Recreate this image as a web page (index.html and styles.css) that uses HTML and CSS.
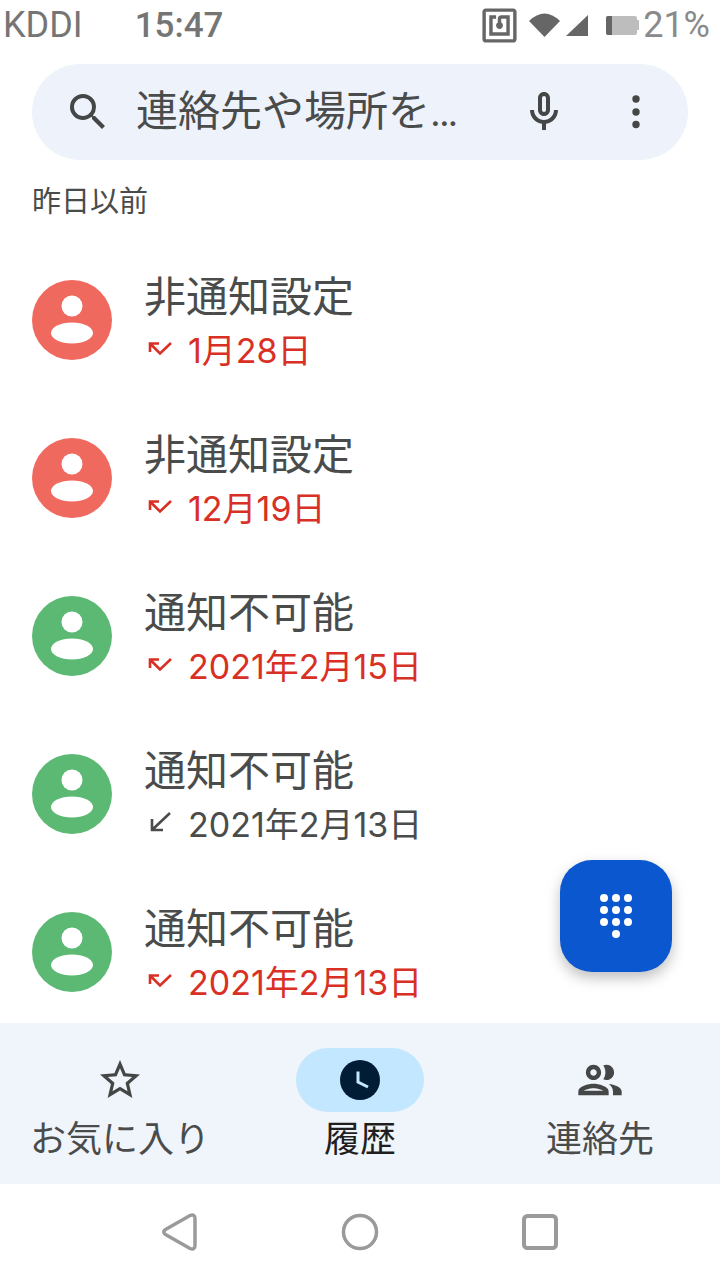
FILE: index.html
```html
<!DOCTYPE html>
<html lang="ja">
<head>
  <meta charset="UTF-8">
  <meta name="viewport" content="width=device-width, initial-scale=1.0">
  <title>履歴</title>
  <link rel="stylesheet" href="styles.css">
</head>
<body>
  <svg class="defs" aria-hidden="true">
    <symbol id="avatar" viewBox="0 0 80 80">
      <circle cx="40" cy="40" r="40" fill="currentColor"/>
      <circle cx="40" cy="26" r="10.5" fill="#fff"/>
      <ellipse cx="40" cy="53" rx="21" ry="10.5" fill="#fff"/>
    </symbol>
    <symbol id="missed" viewBox="0 0 24 24">
      <path d="M2 15V6.5h9M2.5 7l9.5 9.5L23 6" fill="none" stroke="currentColor" stroke-width="2.6"/>
    </symbol>
    <symbol id="incoming" viewBox="0 0 24 24">
      <path d="M4 8v11h11M4.5 18.500 22 2" fill="none" stroke="currentColor" stroke-width="2.6"/>
    </symbol>
  </svg>

  <div class="screen">
    <div class="status">
      <span class="carrier">KDDI</span>
      <span class="time">15:47</span>
      <div class="status-right">
        <svg class="ico-nfc" width="41" height="41" viewBox="0 0 24 24"><path fill="#666" d="M20 2H4c-1.100 0-2 .9-2 2v16c0 1.100.9 2 2 2h16c1.100 0 2-.9 2-2V4c0-1.100-.9-2-2-2zm0 18H4V4h16v16zM18 6h-5c-1.100 0-2 .9-2 2v2.280c-.6.350-1 .98-1 1.720 0 1.100.9 2 2 2s2-.9 2-2c0-.74-.4-1.380-1-1.720V8h3v8H8V8h2V6H6v12h12V6z"/></svg>
        <svg class="ico-wifi" width="31" height="24" viewBox="0 0 31 24"><path fill="#666" d="M0 8Q15.500-7 31 8L15.500 24z"/></svg>
        <svg class="ico-signal" width="22" height="21" viewBox="0 0 22 21"><path fill="#666" d="M0 21 22 0v21z"/></svg>
        <svg class="ico-battery" width="33" height="19" viewBox="0 0 33 19">
          <path fill="#bdbdbd" d="M2 0h27a2 2 0 0 1 2 2v2h2v10h-2v3a2 2 0 0 1-2 2H2a2 2 0 0 1-2-2V2a2 2 0 0 1 2-2z"/>
          <path fill="#666" d="M2 0h4v19H2a2 2 0 0 1-2-2V2a2 2 0 0 1 2-2z"/>
        </svg>
        <span class="battery-text">21%</span>
      </div>
    </div>

    <div class="search">
      <svg width="48" height="48" viewBox="0 0 24 24"><path fill="#444746" d="M15.500 14h-.79l-.28-.27A6.470 6.470 0 0 0 16 9.500 6.500 6.500 0 1 0 9.500 16c1.610 0 3.090-.59 4.230-1.570l.27.28v.79l5 4.990L20.490 19l-4.990-5zm-6 0C7.010 14 5 11.990 5 9.500S7.010 5 9.500 5 14 7.010 14 9.500 11.990 14 9.500 14z"/></svg>
      <span class="search-text">連絡先や場所を…</span>
      <svg width="48" height="48" viewBox="0 0 24 24"><path fill="#444746" d="M12 14c1.660 0 3-1.340 3-3V5c0-1.660-1.340-3-3-3S9 3.340 9 5v6c0 1.660 1.340 3 3 3zm-1-9c0-.55.45-1 1-1s1 .45 1 1v6c0 .55-.45 1-1 1s-1-.45-1-1V5zm6 6c0 2.760-2.240 5-5 5s-5-2.240-5-5H5c0 3.530 2.610 6.430 6 6.920V21h2v-3.080c3.390-.49 6-3.390 6-6.920h-2z"/></svg>
      <svg width="48" height="48" viewBox="0 0 48 48" fill="#444746"><circle cx="24" cy="11" r="3.700"/><circle cx="24" cy="24" r="3.700"/><circle cx="24" cy="36.500" r="3.700"/></svg>
    </div>

    <main class="history">
      <div class="section-label">昨日以前</div>

      <div class="row">
        <svg class="avatar red"><use href="#avatar"/></svg>
        <div class="row-text">
          <div class="name">非通知設定</div>
          <div class="call missed"><svg class="call-icon"><use href="#missed"/></svg>1月28日</div>
        </div>
      </div>
      <div class="row">
        <svg class="avatar red"><use href="#avatar"/></svg>
        <div class="row-text">
          <div class="name">非通知設定</div>
          <div class="call missed"><svg class="call-icon"><use href="#missed"/></svg>12月19日</div>
        </div>
      </div>
      <div class="row">
        <svg class="avatar green"><use href="#avatar"/></svg>
        <div class="row-text">
          <div class="name">通知不可能</div>
          <div class="call missed"><svg class="call-icon"><use href="#missed"/></svg>2021年2月15日</div>
        </div>
      </div>
      <div class="row">
        <svg class="avatar green"><use href="#avatar"/></svg>
        <div class="row-text">
          <div class="name">通知不可能</div>
          <div class="call"><svg class="call-icon"><use href="#incoming"/></svg>2021年2月13日</div>
        </div>
      </div>
      <div class="row">
        <svg class="avatar green"><use href="#avatar"/></svg>
        <div class="row-text">
          <div class="name">通知不可能</div>
          <div class="call missed"><svg class="call-icon"><use href="#missed"/></svg>2021年2月13日</div>
        </div>
      </div>

      <button class="fab" type="button" aria-label="dialpad">
        <svg width="48" height="48" viewBox="0 0 48 48" fill="#fff">
          <circle cx="12" cy="6" r="4"/><circle cx="24" cy="6" r="4"/><circle cx="36" cy="6" r="4"/>
          <circle cx="12" cy="18" r="4"/><circle cx="24" cy="18" r="4"/><circle cx="36" cy="18" r="4"/>
          <circle cx="12" cy="30" r="4"/><circle cx="24" cy="30" r="4"/><circle cx="36" cy="30" r="4"/>
          <circle cx="24" cy="42" r="4"/>
        </svg>
      </button>
    </main>

    <nav class="tabs">
      <div class="tab">
        <div class="tab-icon">
          <svg width="48" height="48" viewBox="0 0 24 24"><path fill="#444746" d="M22 9.240l-7.190-.62L12 2 9.190 8.630 2 9.240l5.460 4.730L5.820 21 12 17.270 18.180 21l-1.630-7.030L22 9.240zM12 15.400l-3.760 2.270 1-4.280-3.320-2.880 4.380-.38L12 6.100l1.710 4.040 4.380.38-3.320 2.880 1 4.280L12 15.400z"/></svg>
        </div>
        <span class="tab-label">お気に入り</span>
      </div>
      <div class="tab active">
        <div class="tab-icon">
          <svg width="40" height="40" viewBox="0 0 40 40">
            <circle cx="20" cy="20" r="20" fill="#001d35"/>
            <path d="M18 11.500V22l10 5" fill="none" stroke="#c2e7ff" stroke-width="3"/>
          </svg>
        </div>
        <span class="tab-label">履歴</span>
      </div>
      <div class="tab">
        <div class="tab-icon">
          <svg width="52" height="52" viewBox="0 0 24 24"><path fill="#444746" d="M9 13.750c-2.340 0-7 1.170-7 3.500V19h14v-1.750c0-2.330-4.660-3.500-7-3.500zM4.340 17c.84-.58 2.870-1.250 4.660-1.250s3.820.67 4.660 1.250H4.340zM9 12c1.930 0 3.500-1.570 3.500-3.500S10.930 5 9 5 5.500 6.570 5.500 8.500 7.070 12 9 12zm0-5c.83 0 1.500.67 1.500 1.500S9.830 10 9 10s-1.500-.67-1.500-1.500S8.170 7 9 7zm7.040 6.810c1.160.84 1.960 1.960 1.960 3.440V19h4v-1.750c0-2.020-3.500-3.170-5.960-3.440zM15 12c1.930 0 3.500-1.570 3.500-3.500S16.930 5 15 5c-.54 0-1.040.13-1.500.35.63.89 1 1.980 1 3.150s-.37 2.260-1 3.150c.46.22.96.35 1.500.35z"/></svg>
        </div>
        <span class="tab-label">連絡先</span>
      </div>
    </nav>

    <div class="sysnav">
      <svg width="40" height="40" viewBox="0 0 40 40"><path d="M5.500 17.500 30 3.500Q35 1.500 35 7V33Q35 38.500 30 36.500L5.500 22.500Q2 20 5.500 17.500Z" fill="none" stroke="#9a9a9a" stroke-width="3.500"/></svg>
      <svg width="40" height="40" viewBox="0 0 40 40"><circle cx="20" cy="20" r="16.500" fill="none" stroke="#9a9a9a" stroke-width="3.500"/></svg>
      <svg width="40" height="40" viewBox="0 0 40 40"><rect x="4" y="4" width="32" height="32" rx="3.500" fill="none" stroke="#9a9a9a" stroke-width="4"/></svg>
    </div>
  </div>
</body>
</html>
```

FILE: styles.css
```css
body {
  margin: 0;
  padding: 0;
  background-color: #fff;
  font-family: Roboto, "Noto Sans CJK JP", sans-serif;
  color: #4a4c4b;
}
.defs {
  display: none;
}
.screen {
  width: 720px;
  height: 1280px;
  display: flex;
  flex-direction: column;
  overflow: hidden;
}

/* status bar */
.status {
  height: 48px;
  flex: none;
  display: flex;
  align-items: center;
  padding: 2px 10px 0 3px;
  box-sizing: border-box;
  color: #757575;
  font-size: 36px;
}
.time {
  margin-left: 52px;
  font-size: 35px;
  font-weight: 500;
}
.status-right {
  margin-left: auto;
  display: flex;
  align-items: center;
}
.ico-wifi {
  margin-left: 9px;
}
.ico-signal {
  margin-left: 6px;
}
.ico-battery {
  margin-left: 18px;
}
.battery-text {
  margin-left: 4px;
  color: #8a8a8a;
}

/* search */
.search {
  flex: none;
  height: 96px;
  margin: 16px 32px 0;
  padding: 0 28px 0 32px;
  border-radius: 48px;
  background-color: #edf2fb;
  display: flex;
  align-items: center;
}
.search-text {
  flex: 1;
  margin-left: 24px;
  font-size: 42px;
  line-height: 56px;
  white-space: nowrap;
}
.search svg:last-child {
  margin-left: 44px;
}

/* list */
.history {
  flex: 1;
  position: relative;
  overflow: hidden;
}
.section-label {
  height: 81px;
  padding: 23px 0 0 32px;
  box-sizing: border-box;
  font-size: 29px;
  line-height: 38px;
}
.row {
  height: 158px;
  padding-left: 32px;
  display: flex;
  align-items: center;
  gap: 32px;
}
.avatar {
  width: 80px;
  height: 80px;
  flex: none;
}
.red {
  color: #f0695e;
}
.green {
  color: #5bb974;
}
.row-text {
  margin-top: 8px;
}
.name {
  font-size: 42px;
  line-height: 54px;
  padding-top: 1px;
  margin-bottom: -1px;
}
.call {
  display: flex;
  align-items: center;
  gap: 16px;
  font-family: Inter, "Noto Sans CJK JP", sans-serif;
  font-size: 34px;
  line-height: 54px;
}
.missed {
  color: #d93025;
}
.call-icon {
  width: 24px;
  height: 24px;
  margin: 0 0 4px 4px;
}
.fab {
  position: absolute;
  left: 560px;
  top: 700px;
  width: 112px;
  height: 112px;
  padding: 0;
  border: none;
  border-radius: 32px;
  background-color: #0b57d0;
  box-shadow: 0 6px 14px rgba(0, 0, 0, 0.25);
  display: flex;
  align-items: center;
  justify-content: center;
}

/* bottom tabs */
.tabs {
  flex: none;
  height: 161px;
  background-color: #f0f4fb;
  display: flex;
}
.tab {
  flex: 1;
  display: flex;
  flex-direction: column;
  align-items: center;
  padding-top: 25px;
  box-sizing: border-box;
}
.tab-icon {
  width: 128px;
  height: 64px;
  border-radius: 32px;
  display: flex;
  align-items: center;
  justify-content: center;
}
.active .tab-icon {
  background-color: #c2e7ff;
}
.tab-label {
  font-size: 36px;
  line-height: 52px;
  padding-top: 2px;
}
.active .tab-label {
  color: #1f1f1f;
}

/* android nav */
.sysnav {
  flex: none;
  height: 96px;
  display: flex;
  align-items: center;
  justify-content: center;
  gap: 140px;
}
```
